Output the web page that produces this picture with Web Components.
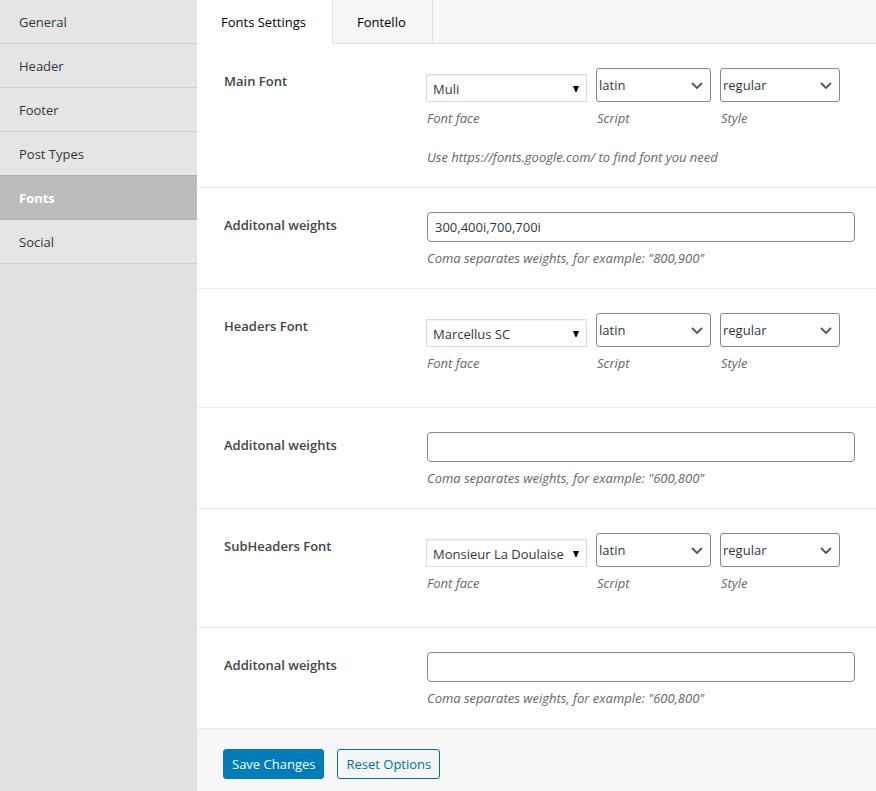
<!DOCTYPE html>
<html lang="en">
<head>
<meta charset="utf-8">
<title>Fonts Settings</title>
<style>
body { margin: 0; font: 13px/20px "Open Sans", "Noto Sans", sans-serif; color: #32373c; background: #fff; }
</style>
</head>
<body>
<settings-page>
  <settings-nav slot="nav">
    <nav-item>General</nav-item>
    <nav-item>Header</nav-item>
    <nav-item>Footer</nav-item>
    <nav-item>Post Types</nav-item>
    <nav-item active>Fonts</nav-item>
    <nav-item>Social</nav-item>
  </settings-nav>
  <settings-tabs>
    <settings-tab active>Fonts Settings</settings-tab>
    <settings-tab>Fontello</settings-tab>
  </settings-tabs>
  <font-row label="Main Font" face="Muli">Use https://fonts.google.com/ to find font you need</font-row>
  <weights-row value="300,400i,700,700i">Coma separates weights, for example: "800,900"</weights-row>
  <font-row label="Headers Font" face="Marcellus SC"></font-row>
  <weights-row>Coma separates weights, for example: "600,800"</weights-row>
  <font-row label="SubHeaders Font" face="Monsieur La Doulaise"></font-row>
  <weights-row>Coma separates weights, for example: "600,800"</weights-row>
  <settings-actions>
    <action-button primary>Save Changes</action-button>
    <action-button>Reset Options</action-button>
  </settings-actions>
</settings-page>

<script>
const define = (name, render) => customElements.define(name, class extends HTMLElement {
  connectedCallback() {
    if (this.shadowRoot) return;
    this.attachShadow({ mode: "open" }).innerHTML = render(this);
  }
});

define("settings-page", () => `
  <style>
    :host { display: grid; grid-template-columns: 197px minmax(0, 1fr); min-height: 100vh; }
    aside { background: #e2e2e2; }
    main { display: flex; flex-direction: column; background: #fff; }
    ::slotted(settings-actions) { flex: 1; }
  </style>
  <aside><slot name="nav"></slot></aside>
  <main><slot></slot></main>`);

define("settings-nav", () => `
  <style>:host { display: block; } nav { display: flex; flex-direction: column; }</style>
  <nav aria-label="Sections"><slot></slot></nav>`);

define("nav-item", el => `
  <style>
    :host { display: block; }
    a { display: block; padding: 12px 19px 11px; color: #32373c; text-decoration: none;
        background: #e5e5e5; border-bottom: 1px solid #cfcfcf; }
    :host([active]) a { background: #bbb; color: #fff; font-weight: 700;
        margin-top: -1px; border-top: 1px solid #afafaf; border-bottom-color: #afafaf; }
  </style>
  <a href="#"${el.hasAttribute("active") ? ' aria-current="page"' : ""}><slot></slot></a>`);

define("settings-tabs", () => `
  <style>
    :host { display: flex; background: #f7f7f7; }
    div { display: flex; }
    i { flex: 1; border-bottom: 1px solid #e1e1e1; }
  </style>
  <div role="tablist"><slot></slot></div><i></i>`);

define("settings-tab", el => `
  <style>
    :host { display: block; }
    button { font: inherit; color: #000; background: #f7f7f7; border: 0; margin: 0;
      border-right: 1px solid #e1e1e1; border-bottom: 1px solid #e1e1e1; border-radius: 0;
      padding: 12px 26px 11px 24px; height: 44px; cursor: pointer; }
    :host([active]) button { background: #fff; border-bottom-color: #fff; }
  </style>
  <button type="button" role="tab" aria-selected="${el.hasAttribute("active")}"><slot></slot></button>`);

const rowStyle = `
  :host { display: grid; grid-template-columns: 202px minmax(0, 1fr);
    padding: 24px 21px 20px 27px; border-bottom: 1px solid #ececec; }
  .title { font-weight: 600; line-height: 26px; color: #444; }
  .hint { margin: 0; font-style: italic; color: #666; }`;

define("font-row", el => `
  <style>
    ${rowStyle}
    .picks { display: flex; align-items: flex-end; gap: 9px; }
    .face { width: 161px; } .script { width: 115px; } .style { width: 120px; }
    .hint { margin-top: 19px; padding-left: 1px; }
    .spacer { height: 14px; }
  </style>
  <div class="title" id="t">${el.getAttribute("label")}</div>
  <div>
    <div class="picks" role="group" aria-labelledby="t">
      <select-field class="face" plain value="${el.getAttribute("face")}" caption="Font face"></select-field>
      <select-field class="script" value="latin" caption="Script"></select-field>
      <select-field class="style" value="regular" caption="Style"></select-field>
    </div>
    ${el.textContent.trim() ? '<p class="hint"><slot></slot></p>' : '<div class="spacer"></div>'}
  </div>`);

define("select-field", el => `
  <style>
    :host { display: block; }
    .box { display: grid; align-items: center; margin-bottom: 6px; }
    select, svg { grid-area: 1 / 1; }
    select { appearance: none; font: inherit; color: #32373c; width: 100%; height: 34px; margin: 0;
      padding: 0 24px 0 2px; background: #fff; border: 1px solid #7e8993; border-radius: 3px; }
    svg { justify-self: end; margin-right: 7px; pointer-events: none; }
    :host([plain]) select { height: 28px; padding: 2px 20px 0 6px; border-color: #ddd; border-radius: 0;
      box-shadow: inset 0 1px 2px rgba(0,0,0,.07); }
    label { display: block; padding-left: 1px; font-style: italic; color: #666; }
  </style>
  <div class="box">
    <select id="s"><option>${el.getAttribute("value")}</option></select>
    ${el.hasAttribute("plain")
      ? '<svg width="8" height="8" viewBox="0 0 8 8" aria-hidden="true"><path d="M1 2h6L4.5 8h-1z"/></svg>'
      : '<svg width="14" height="10" viewBox="0 0 14 10" fill="none" stroke="#555" stroke-width="1.8" aria-hidden="true"><path d="M2 3l5 5 5-5"/></svg>'}
  </div>
  <label for="s">${el.getAttribute("caption")}</label>`);

define("weights-row", el => `
  <style>
    ${rowStyle}
    .control { padding-left: 1px; }
    input { display: block; box-sizing: border-box; width: 100%; height: 30px; margin: 0 0 6px;
      padding: 0 7px; font: inherit; color: #32373c; background: #fff;
      border: 1px solid #7e8993; border-radius: 4px; }
  </style>
  <label class="title" for="w">Additonal weights</label>
  <div class="control">
    <input id="w" type="text" aria-describedby="h" value="${el.getAttribute("value") || ""}">
    <p class="hint" id="h"><slot></slot></p>
  </div>`);

define("settings-actions", () => `
  <style>
    :host { display: flex; align-items: flex-start; gap: 13px; padding: 20px 26px 12px; background: #f7f7f7; }
  </style>
  <slot></slot>`);

define("action-button", () => `
  <style>
    :host { display: block; }
    button { font: inherit; height: 30px; padding: 0 8px; cursor: pointer; white-space: nowrap;
      color: #0071a1; background: #f3f5f6; border: 1px solid #0071a1; border-radius: 3px; }
    :host([primary]) button { color: #fff; background: #007cba; border-color: #007cba; }
  </style>
  <button type="button"><slot></slot></button>`);
</script>
</body>
</html>
